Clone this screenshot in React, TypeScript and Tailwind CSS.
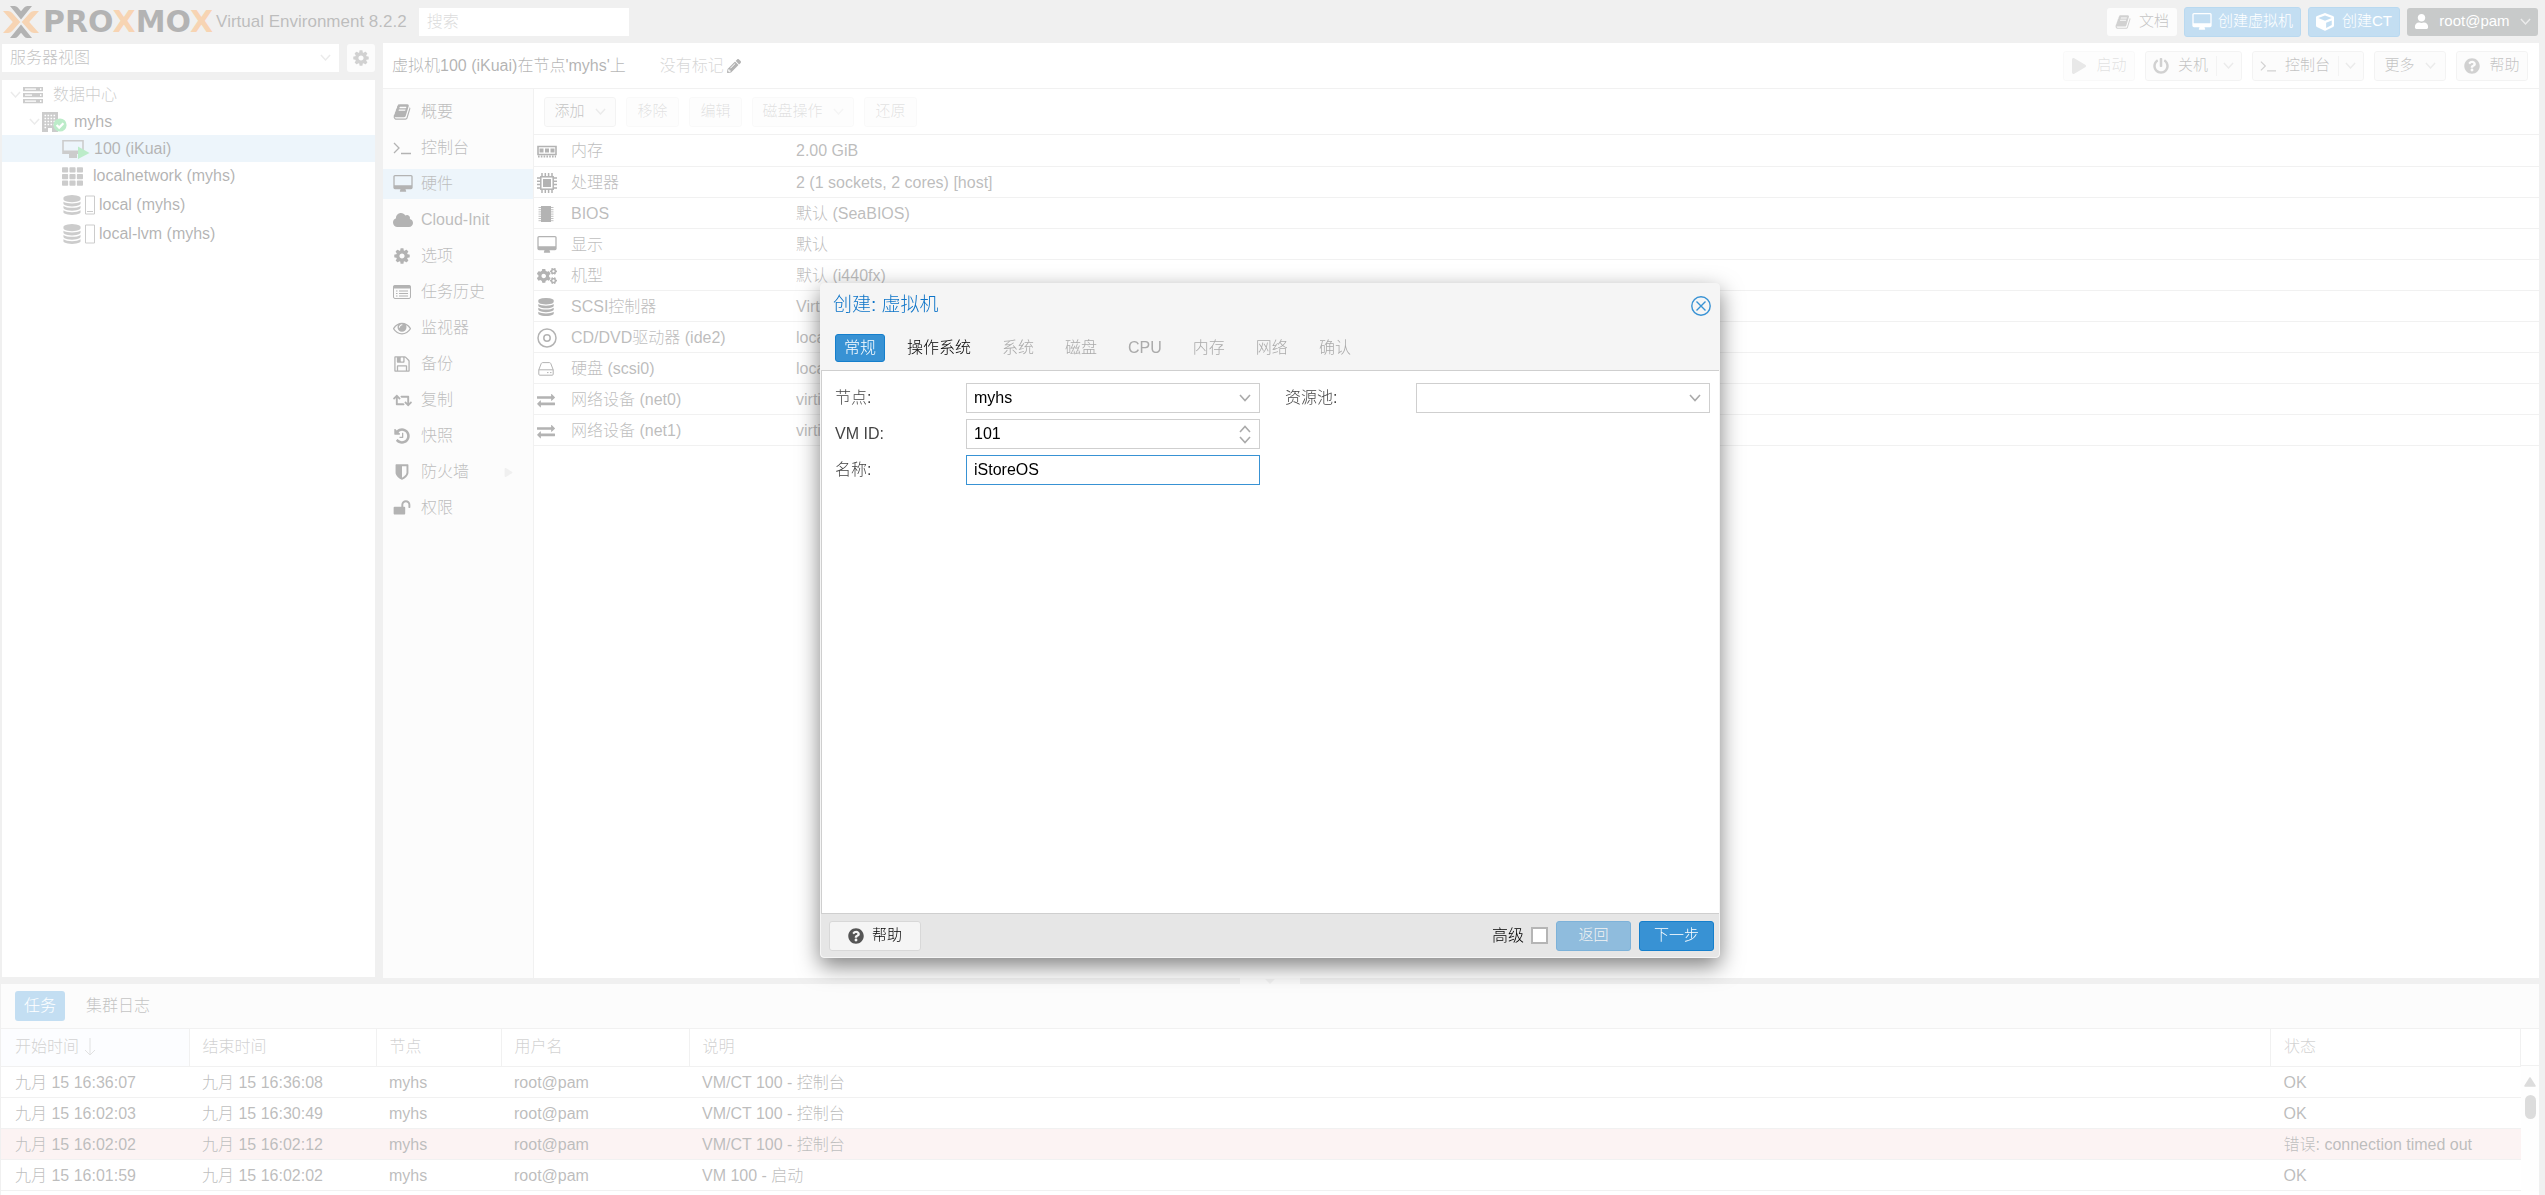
import type { ReactNode } from "react"
import {
  FaCloud,
  FaCogs,
  FaCube,
  FaPencilAlt,
  FaPlay,
  FaPowerOff,
  FaQuestionCircle,
  FaRetweet,
  FaTh,
  FaUser,
} from "react-icons/fa"

type IconProps = { className?: string }

const glyphs = {
  desktop:
    "M1856 992v-832q0-13-9.5-22.5t-22.5-9.5h-1600q-13 0-22.5 9.5t-9.5 22.5v832q0 13 9.5 22.5t22.5 9.5h1600q13 0 22.5-9.5t9.5-22.5zm128-832v1088q0 66-47 113t-113 47h-544q0 37 16 77.5t32 71 16 43.5q0 26-19 45t-45 19h-512q-26 0-45-19t-19-45q0-14 16-44t32-70 16-78h-544q-66 0-113-47t-47-113v-1088q0-66 47-113t113-47h1600q66 0 113 47t47 113z",
  database:
    "M896 768q237 0 443-43t325-127v170q0 69-103 128t-280 93.5-385 34.5-385-34.5-280-93.5-103-128v-170q119 84 325 127t443 43zm0 768q237 0 443-43t325-127v170q0 69-103 128t-280 93.5-385 34.5-385-34.5-280-93.5-103-128v-170q119 84 325 127t443 43zm0-384q237 0 443-43t325-127v170q0 69-103 128t-280 93.5-385 34.5-385-34.5-280-93.5-103-128v-170q119 84 325 127t443 43zm0-1152q208 0 385 34.5t280 93.5 103 128v128q0 69-103 128t-280 93.5-385 34.5-385-34.5-280-93.5-103-128v-128q0-69 103-128t280-93.5 385-34.5z",
  book: "M1703 478q40 57 18 129l-275 906q-19 64-76.5 107.5t-122.5 43.5h-923q-77 0-148.5-53.5t-99.5-131.5q-24-67-2-127 0-4 3-27t4-37q1-8-3-21.5t-3-19.5q2-11 8-21t16.5-23.5 16.5-23.5q23-38 45-91.5t30-91.5q3-10 .5-30t-.5-28q3-11 17-28t17-23q21-36 42-92t25-90q1-9-2.5-32t.5-28q4-13 22-30.5t22-22.5q19-26 42.5-84.5t27.5-96.5q1-8-3-25.5t-2-26.5q2-8 9-18t18-23 17-21q8-12 16.5-30.5t15-35 16-36 19.5-32 26.5-23.5 36-11.5 47.5 5.5l-1 3q38-9 51-9h761q74 0 114 56t18 130l-274 906q-36 119-71.5 153.5t-128.5 34.5h-869q-27 0-38 15-11 16-1 43 24 70 144 70h923q29 0 56-15.5t35-41.5l300-987q7-22 5-57 38 15 59 43zm-1064 2q-4 13 2 22.5t20 9.5h608q13 0 25.5-9.5t16.5-22.5l21-64q4-13-2-22.5t-20-9.5h-608q-13 0-25.5 9.5t-16.5 22.5zm-83 256q-4 13 2 22.5t20 9.5h608q13 0 25.5-9.5t16.5-22.5l21-64q4-13-2-22.5t-20-9.5h-608q-13 0-25.5 9.5t-16.5 22.5z",
  cog: "M1152 896q0-106-75-181t-181-75-181 75-75 181 75 181 181 75 181-75 75-181zm512-109v222q0 12-8 23t-20 13l-185 28q-19 54-39 91 35 50 107 138 10 12 10 25t-9 23q-27 37-99 108t-94 71q-12 0-26-9l-138-108q-44 23-91 38-16 136-29 186-7 28-36 28h-222q-14 0-24.5-8.5t-11.5-21.5l-28-184q-49-16-90-37l-141 107q-10 9-25 9-14 0-25-11-126-114-165-168-7-10-7-23 0-12 8-23 15-21 51-66.5t54-70.5q-27-50-41-99l-183-27q-13-2-21-12.5t-8-23.5v-222q0-12 8-23t19-13l186-28q14-46 39-92-40-57-107-138-10-12-10-24 0-10 9-23 26-36 98.5-107.5t94.5-71.5q13 0 26 10l138 107q44-23 91-38 16-136 29-186 7-28 36-28h222q14 0 24.5 8.5t11.5 21.5l28 184q49 16 90 37l142-107q9-9 24-9 13 0 25 10 129 119 165 170 7 8 7 22 0 12-8 23-15 21-51 66.5t-54 70.5q26 50 41 98l183 28q13 2 21 12.5t8 23.5z",
  eye: "M1664 960q-152-236-381-353 61 104 61 225 0 185-131.5 316.5t-316.5 131.5-316.5-131.5-131.5-316.5q0-121 61-225-229 117-381 353 133 205 333.5 326.5t434.5 121.5 434.5-121.5 333.5-326.5zm-720-384q0-20-14-34t-34-14q-125 0-214.5 89.5t-89.5 214.5q0 20 14 34t34 14 34-14 14-34q0-86 61-147t147-61q20 0 34-14t14-34zm848 384q0 34-20 69-140 230-376.5 368.5t-499.5 138.5-499.5-139-376.5-368q-20-35-20-69t20-69q140-229 376.5-368t499.5-139 499.5 139 376.5 368q20 35 20 69z",
  exchange:
    "M1792 1184v192q0 13-9.5 22.5t-22.5 9.5h-1376v192q0 13-9.5 22.5t-22.5 9.5q-12 0-24-10l-319-320q-9-9-9-22 0-14 9-23l320-320q9-9 23-9 13 0 22.5 9.5t9.5 22.5v192h1376q13 0 22.5 9.5t9.5 22.5zm0-544q0 14-9 23l-320 320q-9 9-23 9-13 0-22.5-9.5t-9.5-22.5v-192h-1376q-13 0-22.5-9.5t-9.5-22.5v-192q0-13 9.5-22.5t22.5-9.5h1376v-192q0-14 9-23t23-9q12 0 24 10l319 319q9 9 9 23z",
  unlock:
    "M1728 576v256q0 26-19 45t-45 19h-64q-26 0-45-19t-19-45v-256q0-106-75-181t-181-75-181 75-75 181v192h96q40 0 68 28t28 68v576q0 40-28 68t-68 28h-960q-40 0-68-28t-28-68v-576q0-40 28-68t68-28h672v-192q0-185 131.5-316.5t316.5-131.5 316.5 131.5 131.5 316.5z",
  shield:
    "M1344 960v-640h-448v1137q119-63 213-137 235-184 235-360zm192-768v768q0 86-33.5 170.5t-83 150-118 127.5-126.5 103-121 77.5-89.5 49.5-42.5 20q-12 6-26 6t-26-6q-16-7-42.5-20t-89.5-49.5-121-77.5-126.5-103-118-127.5-83-150-33.5-170.5v-768q0-26 19-45t45-19h1152q26 0 45 19t19 45z",
  history:
    "M1664 896q0 156-61 298t-164 245-245 164-298 61q-172 0-327-72.5t-264-204.5q-7-10-6.5-22.5t8.5-20.5l137-138q10-9 25-9 16 2 23 12 73 95 179 147t225 52q104 0 198.5-40.5t163.5-109.5 109.5-163.5 40.5-198.5-40.5-198.5-109.5-163.5-163.5-109.5-198.5-40.5q-98 0-188 35.5t-160 101.5l137 138q31 30 14 69-17 40-59 40h-448q-26 0-45-19t-19-45v-448q0-42 40-59 39-17 69 14l130 129q107-101 244.5-156.5t284.5-55.5q156 0 298 61t245 164 164 245 61 298zm-640-288v448q0 14-9 23t-23 9h-320q-14 0-23-9t-9-23v-64q0-14 9-23t23-9h224v-352q0-14 9-23t23-9h64q14 0 23 9t9 23z",
  save: "M512 1536h768v-384h-768v384zm896 0h128v-896q0-14-10-38.5t-20-34.5l-281-281q-10-10-34-20t-39-10v416q0 40-28 68t-68 28h-576q-40 0-68-28t-28-68v-416h-128v1280h128v-416q0-40 28-68t68-28h832q40 0 68 28t28 68v416zm-384-928v-320q0-13-9.5-22.5t-22.5-9.5h-192q-13 0-22.5 9.5t-9.5 22.5v320q0 13 9.5 22.5t22.5 9.5h192q13 0 22.5-9.5t9.5-22.5zm640 32v928q0 40-28 68t-68 28h-1344q-40 0-68-28t-28-68v-1344q0-40 28-68t68-28h928q40 0 88 20t76 48l280 280q28 28 48 76t20 88z",
}

function Glyph({ name, className = "size-[18px]" }: { name: keyof typeof glyphs; className?: string }) {
  return (
    <svg viewBox={name === "desktop" ? "64 0 1920 1792" : "0 0 1792 1792"} className={className} fill="currentColor" aria-hidden="true">
      <path d={glyphs[name]} />
    </svg>
  )
}

function Terminal({ className = "size-[18px]" }: IconProps) {
  return (
    <svg viewBox="0 0 18 18" className={className} fill="none" stroke="currentColor" strokeWidth="1.3" aria-hidden="true">
      <path d="M1 4l5 5-5 5M8 14.5h10" />
    </svg>
  )
}

function ListAlt() {
  return (
    <svg viewBox="0 0 18 18" className="size-[18px]" fill="none" stroke="currentColor" aria-hidden="true">
      <rect x="0.5" y="2.5" width="17" height="13" rx="1.5" />
      <path d="M0.5 4h17" strokeWidth="3" />
      <path d="M3 8h1.5M6 8h9M3 10.5h1.5M6 10.5h9M3 13h1.5M6 13h9" />
    </svg>
  )
}

function Memory() {
  return (
    <svg viewBox="0 0 20 20" className="size-5" fill="none" stroke="currentColor" aria-hidden="true">
      <path d="M1 5.5h18v8H1z" strokeWidth="1.6" />
      <path d="M2.5 9.5h4M8 9.5h4M13.5 9.5h4" strokeWidth="4" />
      <path d="M1 15.5h18" strokeWidth="2" strokeDasharray="1.6 1.2" />
    </svg>
  )
}

function Cpu() {
  return (
    <svg viewBox="0 0 20 20" className="size-5" fill="none" stroke="currentColor" strokeWidth="1.5" aria-hidden="true">
      <rect x="3.8" y="3.8" width="12.4" height="12.4" />
      <rect x="6" y="6" width="8" height="8" fill="currentColor" stroke="none" />
      <path d="M5 0v4M8.3 0v4M11.6 0v4M15 0v4M5 16v4M8.3 16v4M11.6 16v4M15 16v4M0 5h4M0 8.3h4M0 11.6h4M0 15h4M16 5h4M16 8.3h4M16 11.6h4M16 15h4" />
    </svg>
  )
}

function Chip() {
  return (
    <svg viewBox="0 0 18 18" className="size-[18px]" stroke="currentColor" aria-hidden="true">
      <path d="M4 1h10v16H4z" fill="currentColor" stroke="none" />
      <path d="M1.5 2.5h15M1.5 4.7h15M1.5 6.9h15M1.5 9.1h15M1.5 11.3h15M1.5 13.5h15M1.5 15.7h15" strokeWidth="0.8" />
    </svg>
  )
}

function Disc() {
  return (
    <svg viewBox="0 0 20 20" className="size-5" fill="none" stroke="currentColor" strokeWidth="1.5" aria-hidden="true">
      <circle cx="10" cy="10" r="9" />
      <circle cx="10" cy="10" r="3.2" />
    </svg>
  )
}

function Hdd() {
  return (
    <svg viewBox="0 0 18 18" className="size-[18px]" fill="none" stroke="currentColor" aria-hidden="true">
      <path d="M1.8 9.8L4.2 3.6Q4.6 2.6 5.6 2.6h6.8q1 0 1.4 1l2.4 6.2v4.4q0 1-1 1H2.8q-1 0-1-1z" />
      <path d="M1.8 9.8h14.4M10 12.6h1.5M13 12.6h1.5" />
    </svg>
  )
}

function Server() {
  return (
    <svg viewBox="0 0 20 18" className="h-[18px] w-5" aria-hidden="true">
      <path d="M0 1h20v4.2H0zM0 7h20v4.2H0zM0 13h20v4.2H0z" fill="currentColor" />
      <path d="M2 3.1h11M2 9.1h7M2 15.1h11" stroke="white" strokeWidth="1.4" />
      <path d="M17 3.1h1.4M17 9.1h1.4M17 15.1h1.4" stroke="white" strokeWidth="1.6" />
    </svg>
  )
}

function NodeOnline() {
  return (
    <svg viewBox="0 0 25 22" className="h-[22px] w-[25px]" aria-hidden="true">
      <path d="M0 1h16v20H0z" fill="#555" />
      <path d="M2.5 4.5h11M2.5 7.5h11M2.5 10.5h11M2.5 13.5h11M2.5 16.5h2" stroke="white" strokeWidth="1.5" strokeDasharray="1.6 1.4" />
      <path d="M6 17h4v4H6z" fill="white" />
      <circle cx="18" cy="14" r="6.6" fill="#21bf4b" />
      <path d="M14.6 14l2.6 2.6 4.2-4.4" fill="none" stroke="white" strokeWidth="2.2" />
    </svg>
  )
}

function VmRunning() {
  return (
    <svg viewBox="0 0 28 20" className="h-5 w-7" aria-hidden="true">
      <path d="M1 1.8h20v12.4H1z" fill="none" stroke="#555" strokeWidth="1.6" />
      <path d="M1 11.5h20V15H1zM7 15h8v4H7z" fill="#555" />
      <path d="M16 7.5L27.5 14 16 20z" fill="#21bf4b" />
    </svg>
  )
}

function Storage({ level }: { level: boolean }) {
  return (
    <span className="flex items-center gap-[3px] text-[#555]">
      <Glyph name="database" className="size-5" />
      <svg viewBox="0 0 10 20" className="h-5 w-[10px]" fill="none" stroke="currentColor" aria-hidden="true">
        <path d="M0.5 1h9v18h-9z" />
        {level && <path d="M2 16.5h6" />}
      </svg>
    </span>
  )
}

function Chevron({ className = "w-[11px]" }: IconProps) {
  return (
    <svg viewBox="0 0 12 8" className={className} fill="none" stroke="currentColor" strokeWidth="1.6" aria-hidden="true">
      <path d="M1 1l5 5.5L11 1" />
    </svg>
  )
}

function Logo() {
  return (
    <div className="flex items-center gap-1">
      <svg viewBox="0 0 36 32" className="h-8 w-9" aria-hidden="true">
        <path d="M0 5h5q2.500 0 4 1.700L17.300 16 9 25.300Q7.500 27 5 27H0l9.800-11zM36 5h-5q-2.500 0-4 1.700L18.700 16l8.300 9.300Q28.500 27 31 27h5l-9.800-11z" fill="#e57000" />
        <path d="M7 0h4.500q2 0 3.300 1.500L18 5.200l3.200-3.700Q22.500 0 24.500 0H29L18 13.500zM7 32h4.500q2 0 3.300-1.500L18 26.800l3.200 3.700Q22.500 32 24.500 32H29L18 18.500z" fill="#000" />
      </svg>
      <span className="font-['DejaVu_Sans',sans-serif] text-[30px] leading-8 font-bold">
        PRO<span className="text-[#e57000]">X</span>MO<span className="text-[#e57000]">X</span>
      </span>
    </div>
  )
}

type ButtonProps = { children: ReactNode; icon?: ReactNode; menu?: boolean; split?: boolean; disabled?: boolean; className?: string }

function ToolButton({ children, icon, menu, split, disabled, className = "px-[9px]" }: ButtonProps) {
  return (
    <button
      disabled={disabled}
      className={`flex h-[30px] shrink-0 items-center justify-center rounded-[3px] border border-[#d8d8d8] bg-[#f5f5f5] text-[15px] whitespace-nowrap text-[#333] disabled:opacity-50 ${className}`}
    >
      {icon && <span className="mr-[9px] text-[#666]">{icon}</span>}
      {children}
      {split && <span className="ml-2 h-5 w-px bg-[#d8d8d8]" />}
      {(menu || split) && <Chevron className={split ? "ml-[6px] w-[11px] text-[#bbb]" : "ml-[10px] w-[11px] text-[#bbb]"} />}
    </button>
  )
}

const treeItems = [
  { label: "数据中心", icon: <Server />, row: "h-[27px] pl-2 text-[#555]", gap: "ml-[10px]", open: true },
  { label: "myhs", icon: <NodeOnline />, row: "h-[27px] pl-[27px]", gap: "ml-[7px]", open: true },
  { label: "100 (iKuai)", icon: <VmRunning />, row: "h-[27px] bg-[#c1ddf1] pl-[60px]", gap: "ml-1" },
  { label: "localnetwork (myhs)", icon: <FaTh className="size-[21px] text-[#555]" />, row: "h-[28px] pl-[60px]", gap: "ml-[10px]" },
  { label: "local (myhs)", icon: <Storage level />, row: "h-[29px] pl-[60px]", gap: "ml-1" },
  { label: "local-lvm (myhs)", icon: <Storage level={false} />, row: "h-[29px] pl-[60px]", gap: "ml-1" },
]

const navItems = [
  { label: "概要", icon: <Glyph name="book" /> },
  { label: "控制台", icon: <Terminal /> },
  { label: "硬件", icon: <Glyph name="desktop" className="h-[18px] w-5" />, active: true },
  { label: "Cloud-Init", icon: <FaCloud className="size-5" /> },
  { label: "选项", icon: <Glyph name="cog" /> },
  { label: "任务历史", icon: <ListAlt /> },
  { label: "监视器", icon: <Glyph name="eye" /> },
  { label: "备份", icon: <Glyph name="save" /> },
  { label: "复制", icon: <FaRetweet className="size-[19px]" /> },
  { label: "快照", icon: <Glyph name="history" /> },
  { label: "防火墙", icon: <Glyph name="shield" />, more: true },
  { label: "权限", icon: <Glyph name="unlock" /> },
]

const hardware = [
  { label: "内存", value: "2.00 GiB", icon: <Memory /> },
  { label: "处理器", value: "2 (1 sockets, 2 cores) [host]", icon: <Cpu /> },
  { label: "BIOS", value: "默认 (SeaBIOS)", icon: <Chip /> },
  { label: "显示", value: "默认", icon: <Glyph name="desktop" className="h-[18px] w-5" /> },
  { label: "机型", value: "默认 (i440fx)", icon: <FaCogs className="size-5" /> },
  { label: "SCSI控制器", value: "VirtIO", icon: <Glyph name="database" /> },
  { label: "CD/DVD驱动器 (ide2)", value: "local", icon: <Disc /> },
  { label: "硬盘 (scsi0)", value: "local", icon: <Hdd /> },
  { label: "网络设备 (net0)", value: "virtio", icon: <Glyph name="exchange" /> },
  { label: "网络设备 (net1)", value: "virtio", icon: <Glyph name="exchange" /> },
]

const tasks = [
  { start: "九月 15 16:36:07", end: "九月 15 16:36:08", text: "VM/CT 100 - 控制台", status: "OK" },
  { start: "九月 15 16:02:03", end: "九月 15 16:30:49", text: "VM/CT 100 - 控制台", status: "OK" },
  { start: "九月 15 16:02:02", end: "九月 15 16:02:12", text: "VM/CT 100 - 控制台", status: "错误: connection timed out", failed: true },
  { start: "九月 15 16:01:59", end: "九月 15 16:02:02", text: "VM 100 - 启动", status: "OK" },
]

function TopBar() {
  return (
    <header className="flex h-[43px] shrink-0 items-center pr-px pl-[3px]">
      <Logo />
      <span className="ml-[3px] text-[17px] text-[#222]">Virtual Environment 8.2.2</span>
      <input
        aria-label="搜索"
        placeholder="搜索"
        className="ml-3 h-7 w-[210px] bg-white px-2 text-base placeholder:text-[#888]"
      />
      <div className="ml-auto flex items-center gap-[7px]">
        <button className="flex h-7 w-[70px] items-center justify-center gap-2 rounded-[3px] bg-[#f5f5f5] text-[15px] text-[#333]">
          <Glyph name="book" className="size-4 text-[#666]" />
          文档
        </button>
        <button className="flex h-[30px] w-[117px] items-center justify-center gap-[6px] rounded-[3px] border border-[#157fcc] bg-[#3892d4] text-[15px] text-white">
          <Glyph name="desktop" className="h-[18px] w-5" />
          创建虚拟机
        </button>
        <button className="flex h-[30px] w-[92px] items-center justify-center gap-2 rounded-[3px] border border-[#157fcc] bg-[#3892d4] text-[15px] text-white">
          <FaCube className="size-[18px]" />
          创建CT
        </button>
        <button className="flex h-7 w-[131px] items-center justify-center rounded-[3px] bg-[#464d4d] text-[15px] text-white">
          <FaUser className="mr-[10px] size-[15px]" />
          root@pam
          <Chevron className="ml-[10px] w-[11px] text-[#bbb]" />
        </button>
      </div>
    </header>
  )
}

function ResourceTree() {
  return (
    <aside className="flex w-[373px] shrink-0 flex-col gap-2 pt-px pb-px">
      <div className="flex h-7 gap-2">
        <div className="relative flex-1">
          <select aria-label="视图" className="h-full w-full appearance-none bg-white px-2 text-base text-[#333]">
            <option>服务器视图</option>
          </select>
          <Chevron className="pointer-events-none absolute top-[10px] right-[8px] w-[11px] text-[#bbb]" />
        </div>
        <button aria-label="设置" className="flex w-7 items-center justify-center rounded-[3px] bg-[#f5f5f5] text-[#666]">
          <Glyph name="cog" />
        </button>
      </div>
      <ul className="flex-1 bg-white pt-px">
        {treeItems.map((item) => (
          <li key={item.label} className={`flex items-center ${item.row}`}>
            {item.open && <Chevron className="mr-[2px] w-[11px] text-[#bbb]" />}
            {item.icon}
            <span className={item.gap}>{item.label}</span>
          </li>
        ))}
      </ul>
    </aside>
  )
}

function VmPanel() {
  return (
    <main className="flex min-w-0 flex-1 flex-col bg-white">
      <div className="flex h-[46px] shrink-0 items-center border-b border-[#cfcfcf] pr-[11px] pl-[9px]">
        <h1 className="text-base font-light">虚拟机100 (iKuai)在节点'myhs'上</h1>
        <span className="ml-[34px] text-[#777]">没有标记</span>
        <FaPencilAlt className="ml-[3px] size-[14px]" />
        <div className="ml-auto flex gap-[10px]">
          <ToolButton icon={<FaPlay className="size-4" />} disabled className="w-[72px]">启动</ToolButton>
          <ToolButton icon={<FaPowerOff className="size-4" />} split className="w-[97px]">关机</ToolButton>
          <ToolButton icon={<Terminal className="size-4" />} split className="w-[112px]">控制台</ToolButton>
          <ToolButton menu className="w-[72px]">更多</ToolButton>
          <ToolButton icon={<FaQuestionCircle className="size-4" />} className="w-[72px]">帮助</ToolButton>
        </div>
      </div>
      <div className="flex min-h-0 flex-1">
        <nav className="flex w-[151px] shrink-0 flex-col gap-[6px] border-r border-[#cfcfcf] bg-[#f5f5f5] pt-2">
          {navItems.map((item) => (
            <a
              key={item.label}
              href="#"
              className={`flex h-[30px] items-center pl-[10px] ${item.active ? "bg-[#c1ddf1]" : ""}`}
            >
              <span className="flex w-7 shrink-0 items-center">{item.icon}</span>
              <span className="text-[#222]">{item.label}</span>
              {item.more && <FaPlay className="mr-5 ml-auto size-[9px] text-[#ccc]" />}
            </a>
          ))}
        </nav>
        <section className="min-w-0 flex-1">
          <div className="flex h-[46px] items-center gap-[10px] border-b border-[#cfcfcf] pl-[10px]">
            <ToolButton menu className="w-[72px]">添加</ToolButton>
            <ToolButton disabled className="w-[53px]">移除</ToolButton>
            <ToolButton disabled className="w-[53px]">编辑</ToolButton>
            <ToolButton menu disabled className="w-[102px]">磁盘操作</ToolButton>
            <ToolButton disabled className="w-[53px]">还原</ToolButton>
          </div>
          <table className="w-full table-fixed border-collapse text-[#222]">
            <tbody>
              {hardware.map((row) => (
                <tr key={row.label} className="h-[31px] border-b border-[#cfcfcf]">
                  <td className="w-[262px] p-0 pt-[2px] pl-[3px]">
                    <span className="flex items-center">
                      <span className="flex w-[34px] items-center text-black">{row.icon}</span>
                      {row.label}
                    </span>
                  </td>
                  <td className="p-0 pt-[2px]">{row.value}</td>
                </tr>
              ))}
            </tbody>
          </table>
        </section>
      </div>
    </main>
  )
}

function TaskLog() {
  return (
    <section className="ml-px h-[211px] shrink-0 overflow-hidden bg-white">
      <div className="flex h-[45px] items-center border-b border-[#cfcfcf] bg-[#f5f5f5] pl-[14px]">
        <button className="h-[30px] w-[50px] rounded-[3px] bg-[#3892d4] text-white">任务</button>
        <button className="ml-[13px] px-2 text-[#333]">集群日志</button>
      </div>
      <div className="flex">
        <table className="min-w-0 flex-1 table-fixed border-collapse text-left">
          <thead>
            <tr className="h-[37px] border-b border-[#cfcfcf] text-[#666]">
              <th className="w-[188px] border-r border-[#cfcfcf] bg-[#f5f9fd] p-0 pl-[14px] font-light">
                <span className="flex items-center gap-[5px]">
                  开始时间
                  <svg viewBox="0 0 12 18" className="h-[18px] w-3" fill="none" stroke="#999" aria-hidden="true">
                    <path d="M6 0v17M1 12l5 5 5-5" />
                  </svg>
                </span>
              </th>
              <th className="w-[187px] border-r border-[#cfcfcf] p-0 pl-[13px] font-light">结束时间</th>
              <th className="w-[125px] border-r border-[#cfcfcf] p-0 pl-[13px] font-light">节点</th>
              <th className="w-[188px] border-r border-[#cfcfcf] p-0 pl-[13px] font-light">用户名</th>
              <th className="border-r border-[#cfcfcf] p-0 pl-[13px] font-light">说明</th>
              <th className="w-[250px] border-r border-[#cfcfcf] p-0 pl-[13px] font-light">状态</th>
            </tr>
          </thead>
          <tbody className="text-[#222]">
            {tasks.map((task) => (
              <tr key={task.start} className={`h-[31px] border-b border-[#cfcfcf] ${task.failed ? "bg-[#f3d6d7]" : ""}`}>
                <td className="p-0 pt-[2px] pl-[14px]">{task.start}</td>
                <td className="p-0 pt-[2px] pl-[13px]">{task.end}</td>
                <td className="p-0 pt-[2px] pl-[13px]">myhs</td>
                <td className="p-0 pt-[2px] pl-[13px]">root@pam</td>
                <td className="p-0 pt-[2px] pl-[13px]">{task.text}</td>
                <td className="p-0 pt-[2px] pl-[13px]">{task.status}</td>
              </tr>
            ))}
          </tbody>
        </table>
        <div className="flex w-[18px] shrink-0 flex-col items-center">
          <div className="h-[37px] w-full border-b border-[#cfcfcf]" />
          <div className="flex w-full flex-1 flex-col items-center gap-2 bg-[#fafafa] pt-[11px]">
            <svg viewBox="0 0 12 10" className="h-[10px] w-3" aria-hidden="true">
              <path d="M6 1L11 9H1z" fill="#8b8b8b" stroke="#8b8b8b" strokeWidth="1.5" strokeLinejoin="round" />
            </svg>
            <div className="h-6 w-[11px] rounded-full bg-[#8b8b8b]" />
          </div>
        </div>
      </div>
    </section>
  )
}

const wizardTabs = ["常规", "操作系统", "系统", "磁盘", "CPU", "内存", "网络", "确认"]

const fieldBox = "h-[30px] w-full appearance-none rounded-none border border-[#cfcfcf] bg-white px-[7px] text-base outline-none"

function Field({ id, label, children }: { id: string; label: string; children: ReactNode }) {
  return (
    <div className="flex items-center">
      <label htmlFor={id} className="w-[131px] shrink-0 text-[#444]">
        {label}
      </label>
      <div className="relative flex-1">{children}</div>
    </div>
  )
}

function CreateVmDialog() {
  return (
    <div
      role="dialog"
      aria-label="创建: 虚拟机"
      className="flex h-[675px] w-[900px] flex-col rounded-[4px] border border-[#f5f5f5] bg-[#f5f5f5] shadow-[0_8px_22px_rgba(0,0,0,0.5)]"
    >
      <div className="flex h-[43px] items-center justify-between pr-2 pl-3">
        <h2 className="text-[19px] font-light text-[#0d74c8]">创建: 虚拟机</h2>
        <button aria-label="关闭" className="text-[#3892d4]">
          <svg viewBox="0 0 20 20" className="size-5" fill="none" stroke="currentColor" strokeWidth="1.4" aria-hidden="true">
            <circle cx="10" cy="10" r="9.200" />
            <path d="M5.500 5.500l9 9M14.500 5.500l-9 9" />
          </svg>
        </button>
      </div>
      <div role="tablist" className="flex h-[43px] gap-[13px] pt-[7px] pl-[14px]">
        {wizardTabs.map((tab, i) => (
          <button
            key={tab}
            role="tab"
            aria-selected={i === 0}
            disabled={i > 1}
            className="h-7 rounded-[3px] border border-transparent px-2 text-base leading-6 font-light disabled:text-[#aaa] aria-selected:border-[#157fcc] aria-selected:bg-[#3892d4] aria-selected:text-white"
          >
            {tab}
          </button>
        ))}
      </div>
      <form className="grid flex-1 grid-cols-2 content-start gap-x-[25px] border border-r-0 border-[#cfcfcf] bg-white pt-3 pr-[9px] pl-[13px]">
        <div className="flex flex-col gap-[6px]">
          <Field id="node" label="节点:">
            <select id="node" className={fieldBox}>
              <option>myhs</option>
            </select>
            <Chevron className="pointer-events-none absolute top-[11px] right-[9px] w-3 text-[#aaa]" />
          </Field>
          <Field id="vmid" label="VM ID:">
            <input id="vmid" defaultValue="101" className={fieldBox} />
            <span className="pointer-events-none absolute top-[6px] right-[9px] flex flex-col gap-[3px] text-[#aaa]">
              <Chevron className="w-3 rotate-180" />
              <Chevron className="w-3" />
            </span>
          </Field>
          <Field id="name" label="名称:">
            <input
              id="name"
              defaultValue="iStoreOS"
              className="h-[30px] w-full border border-[#3892d4] bg-white px-[7px] text-base outline-none"
            />
          </Field>
        </div>
        <div>
          <Field id="pool" label="资源池:">
            <select id="pool" className={fieldBox} />
            <Chevron className="pointer-events-none absolute top-[11px] right-[9px] w-3 text-[#aaa]" />
          </Field>
        </div>
      </form>
      <div className="flex h-[43px] items-center rounded-b-[4px] bg-[#e6e6e6] pr-[5px] pl-2">
        <button className="flex h-[30px] w-[92px] items-center justify-center gap-2 rounded-[3px] border border-[#d8d8d8] bg-[#f5f5f5] text-[15px]">
          <FaQuestionCircle className="size-4 text-[#555]" />
          帮助
        </button>
        <label htmlFor="advanced" className="ml-auto">
          高级
        </label>
        <input
          id="advanced"
          type="checkbox"
          className="ml-[7px] size-[17px] appearance-none border-2 border-[#b5b5b5] bg-white"
        />
        <button disabled className="ml-2 h-[30px] w-[75px] rounded-[3px] border border-[#157fcc] bg-[#3892d4] text-[15px] text-white disabled:opacity-50">
          返回
        </button>
        <button className="ml-2 h-[30px] w-[75px] rounded-[3px] border border-[#157fcc] bg-[#3892d4] text-[15px] text-white">
          下一步
        </button>
      </div>
    </div>
  )
}

export default function App() {
  return (
    <div className="font-['Liberation_Sans','Noto_Sans_CJK_SC',sans-serif] text-base font-light text-black">
      <div className="flex h-screen min-h-[800px] flex-col overflow-hidden bg-[#cdcdcd] pr-[6px]">
        <TopBar />
        <div className="flex min-h-0 flex-1 gap-2 pl-[2px]">
          <ResourceTree />
          <VmPanel />
        </div>
        <div className="flex h-[6px] shrink-0 justify-center">
          <button aria-label="折叠" className="flex w-[60px] items-center justify-center bg-[#eee]">
            <svg viewBox="0 0 10 5" className="h-[5px] w-[10px]" aria-hidden="true">
              <path d="M0 0h10L5 5z" fill="#ccc" />
            </svg>
          </button>
        </div>
        <TaskLog />
      </div>
      <div className="fixed inset-0 flex items-start justify-center bg-white/70 pt-[283px] pr-[5px]">
        <CreateVmDialog />
      </div>
    </div>
  )
}
